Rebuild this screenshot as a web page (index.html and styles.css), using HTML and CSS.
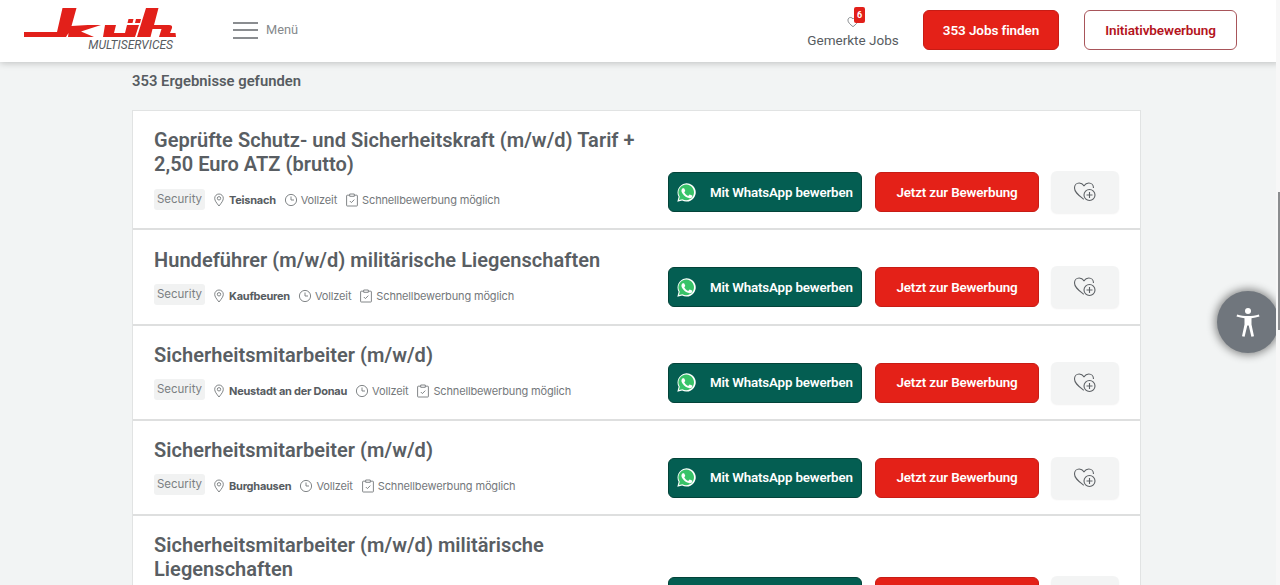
FILE: index.html
```html
<!DOCTYPE html>
<html lang="de">
<head>
<meta charset="utf-8">
<title>Jobs</title>
<link rel="stylesheet" href="styles.css">
</head>
<body>
<svg class="defs" width="0" height="0" aria-hidden="true">
  <symbol id="wa" viewBox="0 0 24 24">
    <path fill="#fff" d="M1.500 22.500l1.500-5.600A10.400 10.400 0 1 1 7 21l-5.500 1.500z"/>
    <path fill="#38c368" d="M3.300 20.700l1-3.800A8.900 8.900 0 1 1 7.400 19.700l-4.100 1z"/>
    <path fill="#fff" d="M9 6.800c-.3-.6-.5-.6-.8-.6h-.7c-.3 0-.7.1-1 .5-.4.400-1.300 1.300-1.300 3s1.300 3.500 1.500 3.700c.2.200 2.500 4 6.200 5.400 3 1.200 3.700.9 4.300.9.700-.1 2.100-.9 2.400-1.700.3-.8.300-1.600.2-1.700-.1-.2-.3-.3-.7-.5s-2.100-1-2.400-1.100c-.3-.1-.6-.2-.8.200-.2.300-.9 1.100-1.100 1.400-.2.200-.4.300-.8.100-.4-.2-1.500-.6-2.900-1.800-1.100-1-1.800-2.200-2-2.500-.2-.4 0-.6.200-.8l.5-.6c.2-.2.200-.3.400-.6.100-.2.100-.5 0-.7-.1-.2-.8-2-1.100-2.800z" transform="translate(1.800 1.800) scale(.85)"/>
  </symbol>
  <symbol id="pin" viewBox="0 0 14 14">
    <path fill="none" stroke="currentColor" stroke-width=".9" d="M7 13C4.500 9.800 2.700 7.600 2.700 5.300a4.300 4.300 0 0 1 8.600 0C11.300 7.600 9.500 9.800 7 13z"/>
    <circle cx="7" cy="5.300" r="1.700" fill="none" stroke="currentColor" stroke-width=".9"/>
  </symbol>
  <symbol id="clock" viewBox="0 0 14 14">
    <circle cx="7" cy="7" r="5.600" fill="none" stroke="currentColor" stroke-width=".9"/>
    <path fill="none" stroke="currentColor" stroke-width=".9" d="M7 3.500V7h3"/>
  </symbol>
  <symbol id="clip" viewBox="0 0 14 14">
    <path fill="none" stroke="currentColor" stroke-width=".9" d="M4.500 2.200H2.200a.6.600 0 0 0-.6.600v9.600a.6.600 0 0 0 .6.600h9.600a.6.600 0 0 0 .6-.6V2.800a.6.600 0 0 0-.6-.6H9.500M4.700 1h4.600v2.300H4.700zM4.800 8l1.600 1.600 2.900-3"/>
  </symbol>
  <symbol id="heartplus" viewBox="0 0 24 24">
    <path fill="none" stroke="currentColor" stroke-width="1.100" d="M10.800 19.200C6 15.400 1.500 12.400 1.500 7.900 1.500 5 3.700 3 6.200 3c2 0 3.600 1 4.800 2.800C12.200 4 13.800 3 15.800 3c2.500 0 4.700 2 4.700 4.900"/>
    <circle cx="16.500" cy="15" r="5.500" fill="#f3f4f4" stroke="currentColor" stroke-width="1.100"/>
    <path fill="none" stroke="currentColor" stroke-width="1.100" d="M16.500 12v6M13.500 15h6"/>
  </symbol>
</svg>

<header class="topbar">
  <div class="brand">
    <svg class="logo" viewBox="0 0 152 30" aria-hidden="true">
      <path fill="#e2201a" d="M0 24H33L38.500 0H52.500L47.500 18L64 17H77L57 23.500L70 29H44L44.500 25L42 29H0Z"/>
      <path fill="#e2201a" d="M81 17H92L90 25H101L103 17H115L111 29H79Z"/>
      <path fill="#e2201a" d="M104.500 11H109.500L108.500 15H103.500ZM112 11H117L116 15H111Z"/>
      <path fill="#e2201a" d="M122 0H134.500L130 17H145C147.500 17 148.500 18 148 20L146 25H151.500L152 29H135L137.500 21H128.500L126.500 29H113Z"/>
    </svg>
    <span class="logo-sub">MULTISERVICES</span>
  </div>
  <div class="menu">
    <span class="burger"><i></i><i></i><i></i></span>
    <span class="menu-label">Menü</span>
  </div>
  <div class="saved">
    <span class="saved-icon">
      <svg viewBox="0 0 14 14" aria-hidden="true"><path fill="none" stroke="currentColor" stroke-width=".9" d="M7 12.500C3.500 9.600 1.100 7.500 1.100 4.800 1.100 3 2.500 1.700 4.100 1.700c1.200 0 2.200.6 2.900 1.700.7-1.100 1.700-1.700 2.900-1.700 1.600 0 3 1.300 3 3.100 0 2.700-2.400 4.800-5.900 7.700z"/></svg>
      <b class="badge">6</b>
    </span>
    <span class="saved-label">Gemerkte Jobs</span>
  </div>
  <a class="btn btn-red btn-find">353 Jobs finden</a>
  <a class="btn btn-outline">Initiativbewerbung</a>
</header>

<main class="content">
  <h2 class="count">353 Ergebnisse gefunden</h2>
  <section class="list">

    <article class="job">
      <div class="job-main">
        <h3 class="job-title">Geprüfte Schutz- und Sicherheitskraft (m/w/d) Tarif + 2,50 Euro ATZ (brutto)</h3>
        <div class="meta">
          <span class="tag">Security</span>
          <svg class="mi"><use href="#pin"/></svg><b class="place">Teisnach</b>
          <svg class="mi"><use href="#clock"/></svg><span class="mt">Vollzeit</span>
          <svg class="mi"><use href="#clip"/></svg><span class="mt">Schnellbewerbung möglich</span>
        </div>
      </div>
      <div class="actions">
        <a class="btn btn-wa"><svg class="wa"><use href="#wa"/></svg>Mit WhatsApp bewerben</a>
        <a class="btn btn-red btn-apply">Jetzt zur Bewerbung</a>
        <a class="fav"><svg class="hp"><use href="#heartplus"/></svg></a>
      </div>
    </article>

    <article class="job">
      <div class="job-main">
        <h3 class="job-title">Hundeführer (m/w/d) militärische Liegenschaften</h3>
        <div class="meta">
          <span class="tag">Security</span>
          <svg class="mi"><use href="#pin"/></svg><b class="place">Kaufbeuren</b>
          <svg class="mi"><use href="#clock"/></svg><span class="mt">Vollzeit</span>
          <svg class="mi"><use href="#clip"/></svg><span class="mt">Schnellbewerbung möglich</span>
        </div>
      </div>
      <div class="actions">
        <a class="btn btn-wa"><svg class="wa"><use href="#wa"/></svg>Mit WhatsApp bewerben</a>
        <a class="btn btn-red btn-apply">Jetzt zur Bewerbung</a>
        <a class="fav"><svg class="hp"><use href="#heartplus"/></svg></a>
      </div>
    </article>

    <article class="job">
      <div class="job-main">
        <h3 class="job-title">Sicherheitsmitarbeiter (m/w/d)</h3>
        <div class="meta">
          <span class="tag">Security</span>
          <svg class="mi"><use href="#pin"/></svg><b class="place">Neustadt an der Donau</b>
          <svg class="mi"><use href="#clock"/></svg><span class="mt">Vollzeit</span>
          <svg class="mi"><use href="#clip"/></svg><span class="mt">Schnellbewerbung möglich</span>
        </div>
      </div>
      <div class="actions">
        <a class="btn btn-wa"><svg class="wa"><use href="#wa"/></svg>Mit WhatsApp bewerben</a>
        <a class="btn btn-red btn-apply">Jetzt zur Bewerbung</a>
        <a class="fav"><svg class="hp"><use href="#heartplus"/></svg></a>
      </div>
    </article>

    <article class="job">
      <div class="job-main">
        <h3 class="job-title">Sicherheitsmitarbeiter (m/w/d)</h3>
        <div class="meta">
          <span class="tag">Security</span>
          <svg class="mi"><use href="#pin"/></svg><b class="place">Burghausen</b>
          <svg class="mi"><use href="#clock"/></svg><span class="mt">Vollzeit</span>
          <svg class="mi"><use href="#clip"/></svg><span class="mt">Schnellbewerbung möglich</span>
        </div>
      </div>
      <div class="actions">
        <a class="btn btn-wa"><svg class="wa"><use href="#wa"/></svg>Mit WhatsApp bewerben</a>
        <a class="btn btn-red btn-apply">Jetzt zur Bewerbung</a>
        <a class="fav"><svg class="hp"><use href="#heartplus"/></svg></a>
      </div>
    </article>

    <article class="job">
      <div class="job-main">
        <h3 class="job-title">Sicherheitsmitarbeiter (m/w/d) militärische Liegenschaften</h3>
        <div class="meta"></div>
      </div>
      <div class="actions">
        <a class="btn btn-wa"></a>
        <a class="btn btn-red btn-apply"></a>
        <a class="fav"></a>
      </div>
    </article>

  </section>
</main>

<button class="a11y" aria-label="Barrierefreiheit">
  <svg viewBox="0 0 24 29" aria-hidden="true">
    <circle cx="12" cy="3" r="3" fill="#fff"/>
    <path fill="#fff" d="M.5 8.500l.7-2c3.400 1 7 1.500 10.800 1.500s7.400-.5 10.800-1.500l.7 2c-2.700.9-5.300 1.400-8 1.700v6.300l2.500 11.800-2.600.5-2.700-11.300h-1.400l-2.700 11.300-2.600-.5 2.500-11.800v-6.300c-2.700-.3-5.300-.8-8-1.700z"/>
  </svg>
</button>
<div class="scrollbar"><div class="scrollthumb"></div></div>
</body>
</html>
```

FILE: styles.css
```css
* { box-sizing: border-box; }
html, body { margin: 0; height: 100%; overflow: hidden; }
body {
  background: #f2f4f4;
  font-family: Roboto, "Liberation Sans", sans-serif;
  color: #575c61;
  position: relative;
}
.defs { position: absolute; }
a { text-decoration: none; }

.topbar {
  height: 62px;
  background: #fff;
  display: flex;
  align-items: center;
  padding: 0 0 2px 24px;
  box-shadow: 0 1px 7px rgba(0, 0, 0, .22);
  position: relative;
  z-index: 2;
}
.brand { width: 152px; height: 44px; display: flex; flex-direction: column; align-items: flex-end; align-self: flex-start; margin-top: 8px; flex: none; }
.logo { width: 152px; height: 30px; display: block; flex: none; }
.logo-sub { font-size: 12px; line-height: 12px; font-style: italic; color: #575c61; margin: 1px 3px 0 0; }
.menu { display: flex; align-items: center; margin-left: 57px; width: 574px; flex: none; }
.burger { display: flex; flex-direction: column; gap: 5.500px; width: 25px; }
.burger i { display: block; height: 2px; background: #8a8d90; }
.menu-label { margin-left: 8px; font-size: 12.800px; color: #85898c; margin-bottom: 2px; }

.saved { width: 92px; display: flex; flex-direction: column; align-items: center; margin-right: 24px; flex: none; }
.saved-icon { position: relative; width: 12px; height: 12px; display: block; margin: 3px 0 4px; color: #6a6e72; }
.saved-icon svg { width: 12px; height: 12px; display: block; }
.badge {
  position: absolute; left: 7px; top: -9px;
  width: 11px; height: 16px; border-radius: 2px;
  background: #e2201a; color: #fff;
  font-size: 9px; line-height: 16px; text-align: center; font-weight: 700;
}
.saved-label { font-size: 13.500px; line-height: 16px; color: #575c61; white-space: nowrap; }

.btn { display: flex; align-items: center; justify-content: center; border-radius: 6px; font-weight: 600; white-space: nowrap; }
.btn-red { background: #e42118; color: #fff; border: 1px solid #c71c15; }
.btn-find { width: 136px; height: 40px; font-size: 13.500px; letter-spacing: -.1px; flex: none; }
.btn-outline {
  width: 153px; height: 40px; margin-left: 25px; font-size: 13.500px; letter-spacing: -.1px; flex: none;
  background: #fff; color: #b4141c; border: 1px solid #a8555a;
}

.content { width: 1009px; margin-left: 132px; }
.count { margin: 11px 0 0; font-size: 14.800px; line-height: 17px; font-weight: 600; color: #575c61; }
.list { margin-top: 20px; background: #fff; border: 1px solid #e1e3e3; border-bottom: 0; }

.job { display: flex; align-items: flex-end; justify-content: space-between; padding: 0 21px 16.200px; border-bottom: 2px solid #dedfdf; }
.job-main { width: 490px; padding-top: 17.400px; }
.job-title { margin: 0; font-size: 20px; line-height: 24px; font-weight: 600; color: #595e63; letter-spacing: .04px; }
.meta { display: flex; align-items: center; margin-top: 12.300px; height: 23.400px; font-family: Inter, Roboto, sans-serif; font-size: 11px; color: #74787b; letter-spacing: -.15px; }
.tag { background: #f1f2f2; border-radius: 3px; width: 51px; text-align: center; height: 21px; line-height: 21px; font-size: 11.500px; letter-spacing: 0; color: #7b7f82; margin: 0 7px 2.400px 0; flex: none; }
.mi { width: 14px; height: 14px; flex: none; margin-right: 3px; color: #74787b; }
.place { font-weight: 700; color: #575c61; margin-right: 8px; white-space: nowrap; letter-spacing: -.25px; }
.mt { margin-right: 8px; white-space: nowrap; }

.actions { display: flex; align-items: center; gap: 12px; flex: none; margin-bottom: -1px; }
.btn-wa {
  width: 194px; height: 40px; margin-right: 1px; background: #045e52; color: #fff; border: 1px solid #034339;
  justify-content: flex-start; padding-left: 7px; font-size: 13.300px; letter-spacing: -.15px;
}
.wa { width: 21px; height: 21px; margin-right: 13px; flex: none; }
.btn-apply { width: 164px; height: 40px; font-size: 13.400px; letter-spacing: -.15px; }
.fav {
  width: 68px; height: 42px; background: #f3f4f4; border-radius: 6px; color: #5d6165;
  display: flex; align-items: center; justify-content: center;
  box-shadow: 0 1px 2px rgba(0, 0, 0, .06);
}
.hp { width: 24px; height: 24px; }

.a11y {
  position: absolute; left: 1217px; top: 291px; width: 62px; height: 62px;
  border-radius: 50%; border: 0; padding: 0;
  background: #70767d;
  box-shadow: 0 0 9px 2px rgba(0, 0, 0, .45);
  display: flex; align-items: center; justify-content: center; z-index: 3;
}
.a11y svg { width: 24px; height: 29px; }
.scrollbar { position: absolute; right: 0; top: 0; bottom: 0; width: 4px; background: #f7f7f7; z-index: 4; }
.scrollthumb { position: absolute; right: 0; top: 192px; width: 2px; height: 138px; background: #8b8d8f; }
```
